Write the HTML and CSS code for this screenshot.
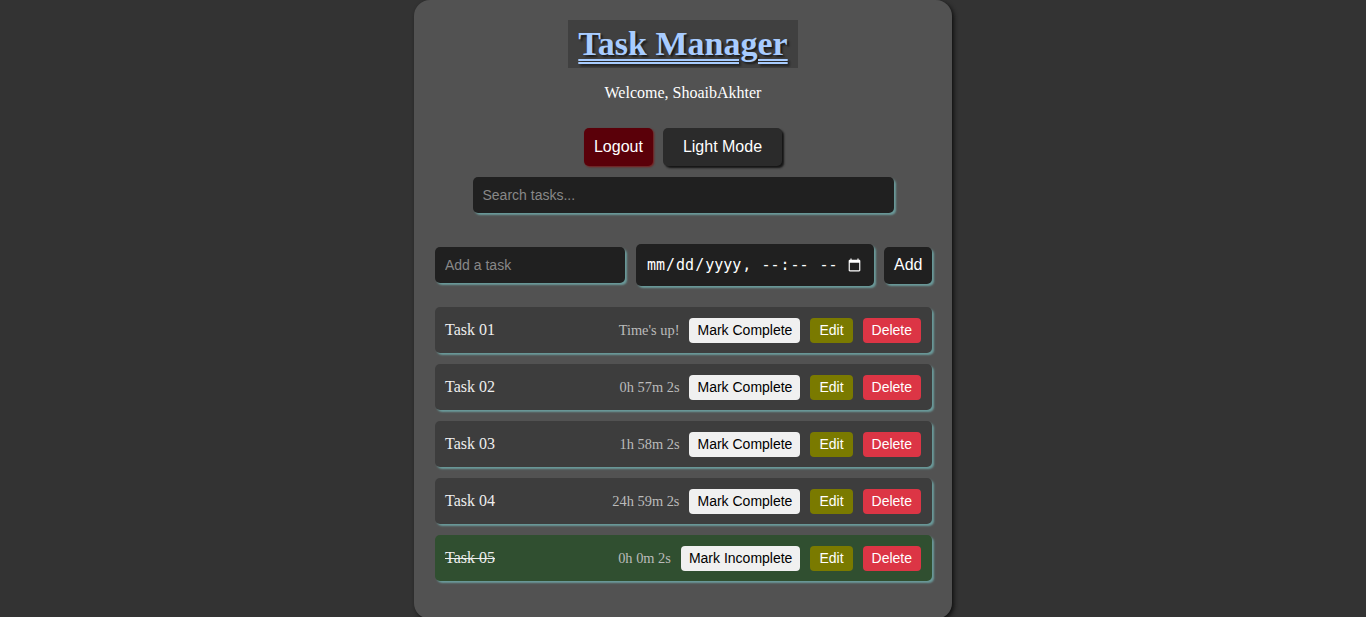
FILE: index.html
```html
<!DOCTYPE html>
<html lang="en-GB">
<head>
<meta charset="utf-8">
<title>Task Manager</title>
<link rel="stylesheet" href="styles.css">
</head>
<body>
<div class="app">
  <div class="head">
    <h1 class="title">Task Manager</h1>
  </div>
  <p class="welcome">Welcome, ShoaibAkhter</p>
  <div class="top-actions">
    <button class="btn-logout">Logout</button>
    <button class="btn-mode">Light Mode</button>
  </div>
  <div class="search-row">
    <input class="search" type="text" placeholder="Search tasks...">
  </div>
  <div class="add-row">
    <input class="task-input" type="text" placeholder="Add a task">
    <input class="date-input" type="datetime-local" lang="en-GB">
    <button class="btn-add">Add</button>
  </div>
  <ul class="tasks">
    <li class="task">
      <span class="name">Task 01</span>
      <span class="time">Time's up!</span>
      <button class="btn-mark">Mark Complete</button>
      <button class="btn-edit">Edit</button>
      <button class="btn-delete">Delete</button>
    </li>
    <li class="task">
      <span class="name">Task 02</span>
      <span class="time">0h 57m 2s</span>
      <button class="btn-mark">Mark Complete</button>
      <button class="btn-edit">Edit</button>
      <button class="btn-delete">Delete</button>
    </li>
    <li class="task">
      <span class="name">Task 03</span>
      <span class="time">1h 58m 2s</span>
      <button class="btn-mark">Mark Complete</button>
      <button class="btn-edit">Edit</button>
      <button class="btn-delete">Delete</button>
    </li>
    <li class="task">
      <span class="name">Task 04</span>
      <span class="time">24h 59m 2s</span>
      <button class="btn-mark">Mark Complete</button>
      <button class="btn-edit">Edit</button>
      <button class="btn-delete">Delete</button>
    </li>
    <li class="task done">
      <span class="name">Task 05</span>
      <span class="time">0h 0m 2s</span>
      <button class="btn-mark">Mark Incomplete</button>
      <button class="btn-edit">Edit</button>
      <button class="btn-delete">Delete</button>
    </li>
  </ul>
</div>
</body>
</html>
```

FILE: styles.css
```css
html, body {
  margin: 0;
  padding: 0;
  background: #333333;
  font-family: "Liberation Serif", "Times New Roman", serif;
  color: #ffffff;
}

.app {
  box-sizing: border-box;
  width: 538px;
  margin: 0 auto;
  padding: 20px 20px 38px;
  background: #525252;
  border-radius: 16px;
  box-shadow: 2px 2px 4px #111111;
}

.head {
  text-align: center;
}

.title {
  display: inline-block;
  margin: 0;
  padding: 0 10px;
  background: #404040;
  color: #a8ccff;
  font-family: "Liberation Serif", "Times New Roman", serif;
  font-size: 34px;
  font-weight: bold;
  line-height: 48px;
  text-decoration: underline double;
  text-decoration-thickness: 2px;
  text-underline-offset: 4px;
  text-shadow: 2px 2px 2px #1a1a1a;
}

.welcome {
  margin: 16px 0 0;
  text-align: center;
  font-size: 16px;
  line-height: 18px;
}

.top-actions {
  display: flex;
  justify-content: center;
  gap: 10px;
  margin-top: 26px;
}

button {
  font-family: "Liberation Sans", Arial, sans-serif;
  border: none;
  cursor: pointer;
}

.btn-logout,
.btn-mode {
  height: 38px;
  font-size: 16px;
  color: #ffffff;
  border-radius: 5px;
  padding: 0 10px;
}

.btn-logout {
  background: #5a0009;
  box-shadow: 1px 1px 2px #7a1a1a;
}

.btn-mode {
  background: #2b2b2b;
  padding: 0 20px;
  box-shadow: 2px 2px 2px #151515;
}

.search-row {
  display: flex;
  justify-content: center;
  margin-top: 11px;
}

.search,
.task-input,
.date-input {
  box-sizing: border-box;
  border: none;
  outline: none;
  border-radius: 5px;
  background: #202020;
  color: #ffffff;
  box-shadow: 2px 2px 2px #6a9a9a;
}

.search {
  width: 421px;
  height: 36px;
  padding: 0 10px;
  font-family: "Liberation Sans", Arial, sans-serif;
  font-size: 14px;
}

.search::placeholder,
.task-input::placeholder {
  color: #888888;
}

.add-row {
  display: flex;
  align-items: center;
  gap: 10px;
  margin-top: 31px;
  padding-left: 1px;
}

.task-input {
  width: 190px;
  height: 36px;
  padding: 0 10px;
  font-family: "Liberation Sans", Arial, sans-serif;
  font-size: 14px;
}

.date-input {
  width: 238px;
  height: 42px;
  padding: 0 10px;
  margin-left: 1px;
  font-family: "DejaVu Sans Mono", "Liberation Mono", monospace;
  font-size: 15px;
  color-scheme: dark;
}

.btn-add {
  height: 37px;
  padding: 0 10px;
  background: #202020;
  color: #ffffff;
  font-size: 16px;
  border-radius: 5px;
  box-shadow: 2px 2px 2px #6a9a9a;
}

.tasks {
  list-style: none;
  margin: 21px 0 0;
  padding: 0 0 0 1px;
  display: flex;
  flex-direction: column;
  gap: 11px;
}

.task {
  display: flex;
  align-items: center;
  height: 46px;
  box-sizing: border-box;
  padding: 0 11px 0 10px;
  background: #3d3d3d;
  border-radius: 5px;
  box-shadow: 2px 2px 2px #6a9a9a;
}

.task.done {
  background: #304f30;
}

.name {
  flex: 1;
  font-size: 16px;
  color: #eeeeee;
}

.task.done .name {
  text-decoration: line-through;
}

.time {
  margin-right: 10px;
  font-size: 14.4px;
  color: #bbbbbb;
}

.btn-mark,
.btn-edit,
.btn-delete {
  height: 25px;
  padding: 0 9px;
  font-size: 14px;
  border-radius: 4px;
}

.btn-mark {
  background: #f0f0f0;
  color: #000000;
  padding: 0 8px;
}

.btn-edit {
  margin-left: 10px;
  background: #7a7a00;
  color: #ffffff;
}

.btn-delete {
  margin-left: 10px;
  background: #dc3545;
  color: #ffffff;
}
```
